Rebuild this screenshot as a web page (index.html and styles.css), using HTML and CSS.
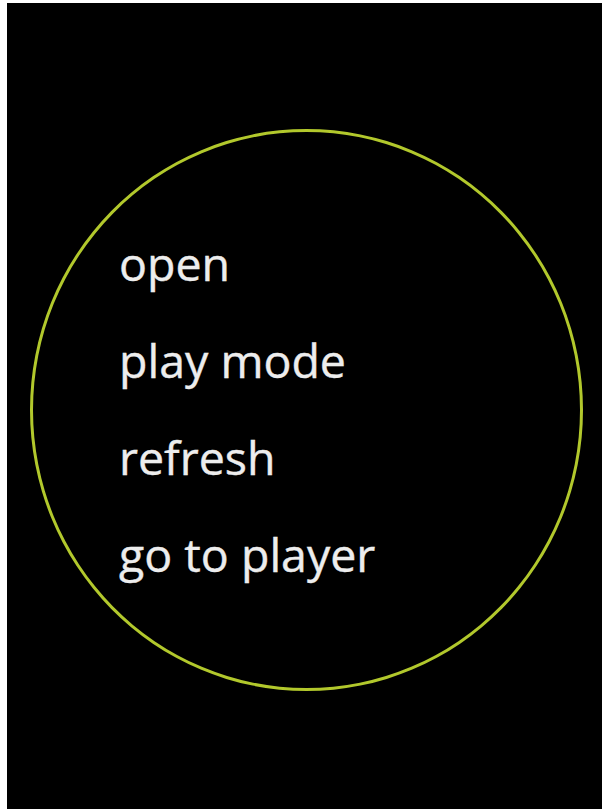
FILE: index.html
```html
<!DOCTYPE html>
<html lang="en">
<head>
<meta charset="utf-8">
<title>Menu</title>
<link rel="stylesheet" href="styles.css">
</head>
<body>
<main class="screen">
  <nav class="ring">
    <ul class="menu">
      <li class="item">open</li>
      <li class="item">play mode</li>
      <li class="item">refresh</li>
      <li class="item">go to player</li>
    </ul>
  </nav>
</main>
</body>
</html>
```

FILE: styles.css
```css
html, body {
  margin: 0;
  padding: 0;
  background: #ffffff;
  height: 100%;
}
body {
  display: flex;
  flex-direction: column;
  padding: 3px 2px 0 7px;
  box-sizing: border-box;
  height: 809px;
  overflow: hidden;
}
.screen {
  flex: 1;
  background: #000000;
  display: flex;
  align-items: flex-start;
  padding: 125.5px 0 0 23px;
}
.ring {
  width: 547px;
  height: 556px;
  border: 3px solid #b2c82c;
  border-radius: 50%;
  flex: none;
}
.menu {
  list-style: none;
  margin: 0;
  padding: 83px 0 0 86px;
  font-family: "Open Sans", "Noto Sans", sans-serif;
  font-size: 46.5px;
  line-height: 97px;
  color: #ededed;
  -webkit-text-stroke: 0.4px #ededed;
}
.item {
  margin: 0;
}
```
